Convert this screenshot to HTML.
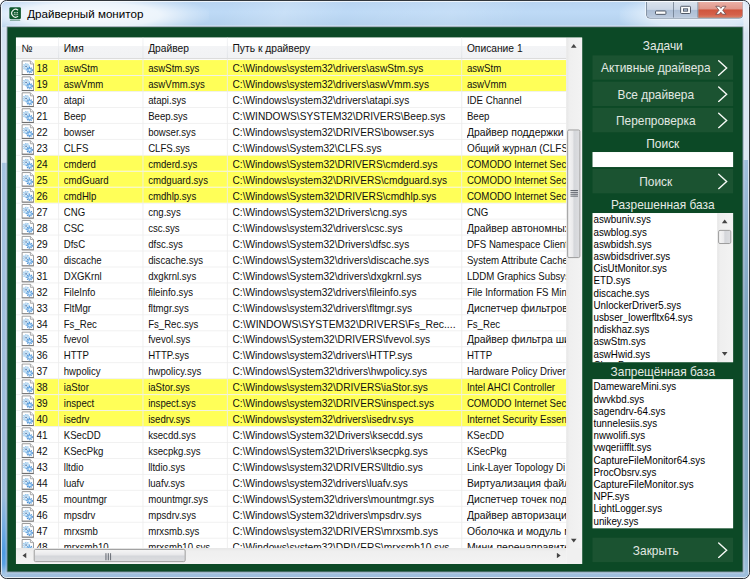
<!DOCTYPE html>
<html lang="ru">
<head>
<meta charset="utf-8">
<title>Драйверный монитор</title>
<style>
html,body{margin:0;padding:0;background:#fff;overflow:hidden;}
body{width:750px;height:579px;position:relative;font-family:"Liberation Sans",sans-serif;}
#sc{position:absolute;left:0;top:0;width:800px;height:617px;transform:scale(0.9375,0.93841);transform-origin:0 0;}
/* window frame */
#win{position:absolute;left:0;top:0;width:800px;height:617px;box-sizing:border-box;border:1px solid #1d222a;border-radius:7px;
 background:linear-gradient(180deg,#b8d4f1 0px,#bedaf6 12px,#b2cfec 28px,#a3c1df 120px,#9cbbda 400px,#9fbfde 617px);overflow:hidden;}
#win:before{content:"";position:absolute;left:0;top:0;right:0;bottom:0;border:1px solid rgba(255,255,255,.85);border-radius:6px;}
#glow{position:absolute;left:-14px;top:-7px;width:236px;height:44px;background:radial-gradient(ellipse at 46% 50%,rgba(255,255,255,.92) 0%,rgba(255,255,255,.72) 42%,rgba(255,255,255,.28) 60%,rgba(255,255,255,0) 74%);}
#glow2{position:absolute;left:660px;top:-8px;width:150px;height:46px;background:radial-gradient(ellipse at 55% 50%,rgba(255,255,255,.62) 0%,rgba(255,255,255,.5) 45%,rgba(255,255,255,0) 75%);}
#topline{position:absolute;left:6px;top:26.5px;width:786px;height:1.1px;background:rgba(255,255,255,.7);}
#streak{position:absolute;left:0;top:0;width:798px;height:29px;background:linear-gradient(115deg,rgba(255,255,255,0) 30%,rgba(255,255,255,.18) 38%,rgba(255,255,255,0) 46%,rgba(255,255,255,.12) 60%,rgba(255,255,255,0) 70%);}
#fl{position:absolute;left:1px;top:28px;width:6px;height:585px;background:linear-gradient(180deg,#d4e2f1 0,#dae5f1 144px,#a6c4e1 145px,#9fbedc 360px,#9bbbda 500px,#78aee2 530px,#4f9be2 560px,#5aa2e4 572px,#a6c6e4 583px);}
#fr{position:absolute;left:791.5px;top:1px;width:5.5px;height:612px;background:linear-gradient(180deg,#cfe0f3 0,#d6e3f1 27px,#dce7f3 168px,#a0bfdc 169px,#8fb1cf 247px,#7fa5c2 327px,#84a9c6 547px,#9dbedb 610px);}
#ticon{position:absolute;left:8px;top:5px;width:16px;height:17px;}
#title{position:absolute;left:28px;top:4.7px;height:18px;line-height:18px;font-size:12.4px;color:#000;white-space:nowrap;}
/* caption buttons */
#cap{position:absolute;left:688.3px;top:1px;width:103.7px;height:17.6px;border:1px solid rgba(85,98,116,.72);border-top:none;border-radius:0 0 5px 5px;box-sizing:border-box;overflow:hidden;box-shadow:0 0 0 1px rgba(255,255,255,.55);}
#cap div{position:absolute;top:0;height:17px;}
#bmin{left:0;width:27.7px;background:linear-gradient(180deg,#d9e1ec 0,#cbd6e5 47%,#adbed5 53%,#bccadd 100%);border-right:1px solid rgba(85,98,116,.7);}
#bmax{left:28.7px;width:25px;background:linear-gradient(180deg,#d9e1ec 0,#cbd6e5 47%,#adbed5 53%,#bccadd 100%);border-right:1px solid rgba(85,98,116,.7);}
#bcl{left:54.7px;width:48px;background:linear-gradient(180deg,#ebb0a6 0,#e0978b 45%,#d0553d 50%,#d4614a 80%,#db8168 100%);box-shadow:inset 0 -1px 0 rgba(150,95,70,.55),inset 1px 0 0 rgba(150,95,70,.35);}
#cap svg{position:absolute;left:-0.2px;top:-1px;}
/* client */
#client{position:absolute;left:7px;top:28.3px;width:784.4px;height:579.9px;background:#0c4926;box-shadow:0 0 0 1px rgba(80,100,118,.62),0 0 0 2px rgba(255,255,255,.36);}
#ci{position:absolute;left:0;top:.7px;width:784px;height:579px;}
/* listview */
#lv{position:absolute;left:9px;top:10px;width:604px;height:560.8px;background:#fff;overflow:hidden;font-size:10.8px;color:#101010;}
#hd{position:absolute;left:0;top:0;width:587px;height:23px;background:linear-gradient(180deg,#fff 0,#fff 40%,#f3f4f6 42%,#f1f2f4 100%);border-bottom:1px solid #d5d5d5;box-sizing:border-box;}
#hd span{position:absolute;top:0;height:22px;line-height:23px;font-size:11.4px;color:#111;white-space:nowrap;transform:scaleX(.96);transform-origin:0 0;}
#hd i{position:absolute;top:0;width:1px;height:22px;background:linear-gradient(180deg,#f4f5f6,#dfe2e6);}
#body{position:absolute;left:0;top:0;width:587px;height:544.4px;overflow:hidden;}
.r{position:absolute;left:0;width:587px;height:17px;border-bottom:1px solid #f0f0f0;box-sizing:border-box;white-space:nowrap;line-height:16px;}
.r span{position:absolute;top:1px;height:16px;overflow:hidden;}
.r .bg{display:none;position:absolute;left:19.7px;top:0;width:570px;height:16px;background:#ffff58;}
.y .bg{display:block;}
.c0{left:21.9px;width:22px;}
.c1{left:51px;width:86px;transform:scaleX(.95);transform-origin:0 0;}
.c2{left:141px;width:86px;transform:scaleX(.95);transform-origin:0 0;}
.c3{left:231px;width:241px;transform:scaleX(1.004);transform-origin:0 0;}
.c4{left:481px;width:140px;transform-origin:0 0;}
.ic{position:absolute;left:4px;top:0;width:16px;height:16px;}
.vg{position:absolute;top:23px;width:1px;height:522px;background:rgba(236,236,236,.9);}
/* scrollbars */
.sbv{position:absolute;left:587px;top:0;width:17px;height:544px;background:linear-gradient(90deg,#e6e6e6 0,#efefef 20%,#f3f3f3 100%);}
.sbh{position:absolute;left:0;top:544.4px;width:587px;height:17px;background:linear-gradient(180deg,#e6e6e6 0,#efefef 20%,#f3f3f3 100%);}
.corner{position:absolute;left:587px;top:544px;width:17px;height:17px;background:#f0f0f0;}
.thumbv{position:absolute;left:1px;width:14px;border:1px solid #979797;border-radius:2px;box-sizing:border-box;background:linear-gradient(90deg,#f5f5f5 0,#e9e9eb 45%,#d4d6da 50%,#dcdde0 100%);}
.thumbh{position:absolute;top:1px;height:14px;border:1px solid #979797;border-radius:2px;box-sizing:border-box;background:linear-gradient(180deg,#f5f5f5 0,#e9e9eb 45%,#d4d6da 50%,#dcdde0 100%);}
.arr{position:absolute;width:0;height:0;}
/* right panel */
.lbl{position:absolute;left:624px;width:150px;height:16px;line-height:16px;text-align:center;color:#e6ebe5;font-size:12.7px;white-space:nowrap;}
.btn{position:absolute;left:624px;width:150px;height:26px;background:#1b5331;color:#e2e8e2;font-size:12.7px;line-height:29.5px;white-space:nowrap;}
.btn span{position:absolute;left:0;top:0;width:135px;height:26px;text-align:center;overflow:hidden;}
.btn svg{position:absolute;left:131.2px;top:4px;}
#edit{position:absolute;left:624px;top:131.6px;width:150px;height:16.4px;background:#fff;}
.lb{position:absolute;left:624px;width:150px;height:159px;background:#fff;overflow:hidden;font-size:11px;line-height:13px;color:#000;}
.lb div.it{padding-left:2px;white-space:nowrap;}
.lb .items{position:absolute;left:0.7px;top:1.3px;transform:scaleX(.95);transform-origin:0 0;}
.lb .items div{white-space:nowrap;height:13px;}
</style>
</head>
<body>
<svg width="0" height="0" style="position:absolute">
 <defs>
  <symbol id="pg" viewBox="0 0 16 16">
   <path d="M2.6 0.9 H11.4 L14.7 4.2 V15.4 H2.6 Z" fill="#fff" stroke="#939393" stroke-width="1"/>
   <path d="M2.2 15.5 H15.1" stroke="#6f6f6f" stroke-width="1.1" fill="none"/>
   <path d="M11.4 0.9 V4.2 H14.7" fill="#f2f2f2" stroke="#9c9c9c" stroke-width=".9"/>
   <circle cx="7" cy="7.1" r="3.25" fill="none" stroke="#7ab6e6" stroke-width="1.1" stroke-dasharray="1.35 0.95"/>
   <circle cx="7" cy="7.1" r="2.8" fill="#b2d6f0"/>
   <circle cx="7" cy="7.1" r="1.7" fill="#dcedfa"/>
   <circle cx="6.8" cy="6.9" r="0.85" fill="#50709f"/>
   <circle cx="10.6" cy="10.7" r="2.9" fill="none" stroke="#3f88d2" stroke-width="1.1" stroke-dasharray="1.25 0.85"/>
   <circle cx="10.6" cy="10.7" r="2.45" fill="#69a8e1"/>
   <circle cx="10.6" cy="10.7" r="1.25" fill="#d8ecfb"/>
  </symbol>
  <symbol id="chev" viewBox="0 0 16 18">
   <path d="M3.6 1.7 L12.1 9.45 L3.6 17.2" fill="none" stroke="#f7f9f6" stroke-width="1.5" stroke-linecap="round" stroke-linejoin="miter"/>
  </symbol>
 </defs>
</svg>
<div id="sc">
<div id="win">
 <div id="fl"></div><div id="fr"></div>
 <div id="glow"></div>
 <div id="streak"></div><div id="glow2"></div>
 <div id="topline"></div>
 <svg id="ticon" viewBox="0 0 16 17">
  <rect x="1" y="1.6" width="12.3" height="12.9" rx="1.5" fill="#10592f"/>
  <path d="M10.3 5 A4.1 4.1 0 1 0 10.3 11.2" fill="none" stroke="#edf3ed" stroke-width="1.3"/>
  <path d="M6 7.5 H7.6 M8.6 7.5 H10.2" stroke="#edf3ed" stroke-width="1.15"/>
  <path d="M5.6 9.2 Q8 10.6 10.4 9.2" stroke="#cfe0d2" stroke-width=".7" fill="none"/>
  <rect x="1.6" y="15.3" width="11" height="1" fill="#5d8f78" opacity=".7"/>
 </svg>
 <div id="title">Драйверный монитор</div>
 <div id="cap">
  <div id="bmin"></div><div id="bmax"></div><div id="bcl"></div>
  <svg width="103" height="19" viewBox="0 0 103 19">
   <rect x="9.2" y="10.7" width="11.1" height="3.6" rx=".8" fill="#fdfdfd" stroke="#48505e" stroke-width="1"/>
   <rect x="36" y="5.7" width="10.5" height="7.7" rx=".9" fill="#fdfdfd" stroke="#48505e" stroke-width="1"/>
   <rect x="39" y="8.4" width="4.5" height="2.5" fill="#aebfd6" stroke="#48505e" stroke-width=".9"/>
   <path d="M73.5 5.7 L77.1 5.7 L78.9 7.9 L80.7 5.7 L84.3 5.7 L80.9 9.95 L84.3 14.2 L80.7 14.2 L78.9 12 L77.1 14.2 L73.5 14.2 L76.9 9.95 Z" fill="#fff" stroke="#6a4a4c" stroke-width=".85" stroke-linejoin="round"/>
  </svg>
 </div>
 <div id="client"><div id="ci">
  <div id="lv">
   <div id="body">
<div class="r y" style="top:24px"><svg class="ic"><use href="#pg"/></svg><b class="bg"></b><span class="c0">18</span><span class="c1">aswStm</span><span class="c2">aswStm.sys</span><span class="c3">C:\Windows\system32\drivers\aswStm.sys</span><span class="c4" style="transform:scaleX(0.955)">aswStm</span></div>
<div class="r y" style="top:41px"><svg class="ic"><use href="#pg"/></svg><b class="bg"></b><span class="c0">19</span><span class="c1">aswVmm</span><span class="c2">aswVmm.sys</span><span class="c3">C:\Windows\system32\drivers\aswVmm.sys</span><span class="c4" style="transform:scaleX(0.955)">aswVmm</span></div>
<div class="r" style="top:58px"><svg class="ic"><use href="#pg"/></svg><b class="bg"></b><span class="c0">20</span><span class="c1">atapi</span><span class="c2">atapi.sys</span><span class="c3">C:\Windows\system32\drivers\atapi.sys</span><span class="c4" style="transform:scaleX(0.955)">IDE Channel</span></div>
<div class="r" style="top:75px"><svg class="ic"><use href="#pg"/></svg><b class="bg"></b><span class="c0">21</span><span class="c1">Beep</span><span class="c2">Beep.sys</span><span class="c3">C:\WINDOWS\SYSTEM32\DRIVERS\Beep.sys</span><span class="c4" style="transform:scaleX(0.955)">Beep</span></div>
<div class="r" style="top:92px"><svg class="ic"><use href="#pg"/></svg><b class="bg"></b><span class="c0">22</span><span class="c1">bowser</span><span class="c2">bowser.sys</span><span class="c3">C:\Windows\system32\DRIVERS\bowser.sys</span><span class="c4" style="transform:scaleX(1.03)">Драйвер поддержки се</span></div>
<div class="r" style="top:109px"><svg class="ic"><use href="#pg"/></svg><b class="bg"></b><span class="c0">23</span><span class="c1">CLFS</span><span class="c2">CLFS.sys</span><span class="c3">C:\Windows\System32\CLFS.sys</span><span class="c4" style="transform:scaleX(0.985)">Общий журнал (CLFS)</span></div>
<div class="r y" style="top:126px"><svg class="ic"><use href="#pg"/></svg><b class="bg"></b><span class="c0">24</span><span class="c1">cmderd</span><span class="c2">cmderd.sys</span><span class="c3">C:\Windows\System32\DRIVERS\cmderd.sys</span><span class="c4" style="transform:scaleX(0.955)">COMODO Internet Security</span></div>
<div class="r y" style="top:143px"><svg class="ic"><use href="#pg"/></svg><b class="bg"></b><span class="c0">25</span><span class="c1">cmdGuard</span><span class="c2">cmdguard.sys</span><span class="c3">C:\Windows\system32\DRIVERS\cmdguard.sys</span><span class="c4" style="transform:scaleX(0.955)">COMODO Internet Security</span></div>
<div class="r y" style="top:160px"><svg class="ic"><use href="#pg"/></svg><b class="bg"></b><span class="c0">26</span><span class="c1">cmdHlp</span><span class="c2">cmdhlp.sys</span><span class="c3">C:\Windows\System32\DRIVERS\cmdhlp.sys</span><span class="c4" style="transform:scaleX(0.955)">COMODO Internet Security</span></div>
<div class="r" style="top:177px"><svg class="ic"><use href="#pg"/></svg><b class="bg"></b><span class="c0">27</span><span class="c1">CNG</span><span class="c2">cng.sys</span><span class="c3">C:\Windows\System32\Drivers\cng.sys</span><span class="c4" style="transform:scaleX(0.955)">CNG</span></div>
<div class="r" style="top:194px"><svg class="ic"><use href="#pg"/></svg><b class="bg"></b><span class="c0">28</span><span class="c1">CSC</span><span class="c2">csc.sys</span><span class="c3">C:\Windows\system32\drivers\csc.sys</span><span class="c4" style="transform:scaleX(1.03)">Драйвер автономных</span></div>
<div class="r" style="top:211px"><svg class="ic"><use href="#pg"/></svg><b class="bg"></b><span class="c0">29</span><span class="c1">DfsC</span><span class="c2">dfsc.sys</span><span class="c3">C:\Windows\System32\Drivers\dfsc.sys</span><span class="c4" style="transform:scaleX(0.955)">DFS Namespace Client</span></div>
<div class="r" style="top:228px"><svg class="ic"><use href="#pg"/></svg><b class="bg"></b><span class="c0">30</span><span class="c1">discache</span><span class="c2">discache.sys</span><span class="c3">C:\Windows\System32\drivers\discache.sys</span><span class="c4" style="transform:scaleX(0.955)">System Attribute Cache</span></div>
<div class="r" style="top:245px"><svg class="ic"><use href="#pg"/></svg><b class="bg"></b><span class="c0">31</span><span class="c1">DXGKrnl</span><span class="c2">dxgkrnl.sys</span><span class="c3">C:\Windows\System32\drivers\dxgkrnl.sys</span><span class="c4" style="transform:scaleX(0.955)">LDDM Graphics Subsystem</span></div>
<div class="r" style="top:262px"><svg class="ic"><use href="#pg"/></svg><b class="bg"></b><span class="c0">32</span><span class="c1">FileInfo</span><span class="c2">fileinfo.sys</span><span class="c3">C:\Windows\system32\drivers\fileinfo.sys</span><span class="c4" style="transform:scaleX(0.955)">File Information FS Mini</span></div>
<div class="r" style="top:279px"><svg class="ic"><use href="#pg"/></svg><b class="bg"></b><span class="c0">33</span><span class="c1">FltMgr</span><span class="c2">fltmgr.sys</span><span class="c3">C:\Windows\system32\drivers\fltmgr.sys</span><span class="c4" style="transform:scaleX(1.03)">Диспетчер фильтров</span></div>
<div class="r" style="top:296px"><svg class="ic"><use href="#pg"/></svg><b class="bg"></b><span class="c0">34</span><span class="c1">Fs_Rec</span><span class="c2">Fs_Rec.sys</span><span class="c3" style="transform:scaleX(1.03)">C:\WINDOWS\SYSTEM32\DRIVERS\Fs_Rec....</span><span class="c4" style="transform:scaleX(0.955)">Fs_Rec</span></div>
<div class="r" style="top:313px"><svg class="ic"><use href="#pg"/></svg><b class="bg"></b><span class="c0">35</span><span class="c1">fvevol</span><span class="c2">fvevol.sys</span><span class="c3">C:\Windows\System32\DRIVERS\fvevol.sys</span><span class="c4" style="transform:scaleX(1.03)">Драйвер фильтра шиф</span></div>
<div class="r" style="top:330px"><svg class="ic"><use href="#pg"/></svg><b class="bg"></b><span class="c0">36</span><span class="c1">HTTP</span><span class="c2">HTTP.sys</span><span class="c3">C:\Windows\system32\drivers\HTTP.sys</span><span class="c4" style="transform:scaleX(0.955)">HTTP</span></div>
<div class="r" style="top:347px"><svg class="ic"><use href="#pg"/></svg><b class="bg"></b><span class="c0">37</span><span class="c1">hwpolicy</span><span class="c2">hwpolicy.sys</span><span class="c3">C:\Windows\System32\drivers\hwpolicy.sys</span><span class="c4" style="transform:scaleX(0.955)">Hardware Policy Driver</span></div>
<div class="r y" style="top:364px"><svg class="ic"><use href="#pg"/></svg><b class="bg"></b><span class="c0">38</span><span class="c1">iaStor</span><span class="c2">iaStor.sys</span><span class="c3">C:\Windows\system32\DRIVERS\iaStor.sys</span><span class="c4" style="transform:scaleX(0.955)">Intel AHCI Controller</span></div>
<div class="r y" style="top:381px"><svg class="ic"><use href="#pg"/></svg><b class="bg"></b><span class="c0">39</span><span class="c1">inspect</span><span class="c2">inspect.sys</span><span class="c3">C:\Windows\system32\DRIVERS\inspect.sys</span><span class="c4" style="transform:scaleX(0.955)">COMODO Internet Security</span></div>
<div class="r y" style="top:398px"><svg class="ic"><use href="#pg"/></svg><b class="bg"></b><span class="c0">40</span><span class="c1">isedrv</span><span class="c2">isedrv.sys</span><span class="c3">C:\Windows\system32\drivers\isedrv.sys</span><span class="c4" style="transform:scaleX(0.955)">Internet Security Essentials</span></div>
<div class="r" style="top:415px"><svg class="ic"><use href="#pg"/></svg><b class="bg"></b><span class="c0">41</span><span class="c1">KSecDD</span><span class="c2">ksecdd.sys</span><span class="c3">C:\Windows\System32\Drivers\ksecdd.sys</span><span class="c4" style="transform:scaleX(0.955)">KSecDD</span></div>
<div class="r" style="top:432px"><svg class="ic"><use href="#pg"/></svg><b class="bg"></b><span class="c0">42</span><span class="c1">KSecPkg</span><span class="c2">ksecpkg.sys</span><span class="c3">C:\Windows\System32\Drivers\ksecpkg.sys</span><span class="c4" style="transform:scaleX(0.955)">KSecPkg</span></div>
<div class="r" style="top:449px"><svg class="ic"><use href="#pg"/></svg><b class="bg"></b><span class="c0">43</span><span class="c1">lltdio</span><span class="c2">lltdio.sys</span><span class="c3">C:\Windows\system32\DRIVERS\lltdio.sys</span><span class="c4" style="transform:scaleX(0.955)">Link-Layer Topology Di</span></div>
<div class="r" style="top:466px"><svg class="ic"><use href="#pg"/></svg><b class="bg"></b><span class="c0">44</span><span class="c1">luafv</span><span class="c2">luafv.sys</span><span class="c3">C:\Windows\system32\drivers\luafv.sys</span><span class="c4" style="transform:scaleX(1.03)">Виртуализация файло</span></div>
<div class="r" style="top:483px"><svg class="ic"><use href="#pg"/></svg><b class="bg"></b><span class="c0">45</span><span class="c1">mountmgr</span><span class="c2">mountmgr.sys</span><span class="c3">C:\Windows\System32\drivers\mountmgr.sys</span><span class="c4" style="transform:scaleX(1.03)">Диспетчер точек подк</span></div>
<div class="r" style="top:500px"><svg class="ic"><use href="#pg"/></svg><b class="bg"></b><span class="c0">46</span><span class="c1">mpsdrv</span><span class="c2">mpsdrv.sys</span><span class="c3">C:\Windows\System32\drivers\mpsdrv.sys</span><span class="c4" style="transform:scaleX(1.03)">Драйвер авторизации</span></div>
<div class="r" style="top:517px"><svg class="ic"><use href="#pg"/></svg><b class="bg"></b><span class="c0">47</span><span class="c1">mrxsmb</span><span class="c2">mrxsmb.sys</span><span class="c3">C:\Windows\system32\DRIVERS\mrxsmb.sys</span><span class="c4" style="transform:scaleX(1.03)">Оболочка и модуль ми</span></div>
<div class="r" style="top:534px"><svg class="ic"><use href="#pg"/></svg><b class="bg"></b><span class="c0">48</span><span class="c1">mrxsmb10</span><span class="c2">mrxsmb10.sys</span><span class="c3">C:\Windows\system32\DRIVERS\mrxsmb10.sys</span><span class="c4" style="transform:scaleX(1.03)">Мини-перенаправитель</span></div>
    <div class="vg" style="left:45px"></div><div class="vg" style="left:135px"></div><div class="vg" style="left:225px"></div><div class="vg" style="left:475px"></div>
   </div>
   <div id="hd">
    <span style="left:6px">№</span><span style="left:51px">Имя</span><span style="left:141px">Драйвер</span><span style="left:231px">Путь к драйверу</span><span style="left:481px">Описание 1</span>
    <i style="left:45px"></i><i style="left:135px"></i><i style="left:225px"></i><i style="left:475px"></i>
   </div>
   <div class="sbv">
    <div class="arr" style="left:5px;top:7.5px;border-left:3.5px solid transparent;border-right:3.5px solid transparent;border-bottom:4px solid #444"></div>
    <div class="thumbv" style="top:98px;height:137px"></div>
    <svg style="position:absolute;left:3.6px;top:162px" width="9" height="9" viewBox="0 0 9 9"><path d="M0.5 1H8.5M0.5 3H8.5M0.5 5H8.5M0.5 7H8.5" stroke="#5a5e66" stroke-width="1"/></svg>
    <div class="arr" style="left:5px;top:534px;border-left:3.5px solid transparent;border-right:3.5px solid transparent;border-top:4px solid #444"></div>
   </div>
   <div class="sbh">
    <div class="arr" style="left:6.5px;top:5px;border-top:3.5px solid transparent;border-bottom:3.5px solid transparent;border-right:4px solid #444"></div>
    <div class="thumbh" style="left:18.5px;width:162.5px"></div>
    <svg style="position:absolute;left:95.4px;top:4.5px" width="7" height="9" viewBox="0 0 7 9"><path d="M1 0.5V8M3.5 0.5V8M6 0.5V8" stroke="#5a5e66" stroke-width="1"/></svg>
    <div class="arr" style="left:576.5px;top:5px;border-top:3.5px solid transparent;border-bottom:3.5px solid transparent;border-left:4px solid #444"></div>
   </div>
   <div class="corner"></div>
  </div>

  <div class="lbl" style="top:11px">Задачи</div>
  <div class="btn" style="top:29.2px"><span>Активные драйвера</span><svg width="16" height="18"><use href="#chev"/></svg></div>
  <div class="btn" style="top:57.1px"><span>Все драйвера</span><svg width="16" height="18"><use href="#chev"/></svg></div>
  <div class="btn" style="top:85.1px"><span>Перепроверка</span><svg width="16" height="18"><use href="#chev"/></svg></div>
  <div class="lbl" style="top:116.1px">Поиск</div>
  <div id="edit"></div>
  <div class="btn" style="top:150px"><span>Поиск</span><svg width="16" height="18"><use href="#chev"/></svg></div>
  <div class="lbl" style="top:180.6px">Разрешенная база</div>
  <div class="lb" style="top:197px">
   <div class="items"><div>aswbuniv.sys</div><div>aswblog.sys</div><div>aswbidsh.sys</div><div>aswbidsdriver.sys</div><div>CisUtMonitor.sys</div><div>ETD.sys</div><div>discache.sys</div><div>UnlockerDriver5.sys</div><div>usbser_lowerfltx64.sys</div><div>ndiskhaz.sys</div><div>aswStm.sys</div><div>aswHwid.sys</div><div style="margin-top:-1.7px">ClassPnp.sys</div></div>
   <div style="position:absolute;left:133px;top:0;width:17px;height:159px;background:linear-gradient(90deg,#e6e6e6 0,#efefef 20%,#f3f3f3 100%)">
    <div class="arr" style="left:5px;top:7.5px;border-left:3.5px solid transparent;border-right:3.5px solid transparent;border-bottom:4px solid #444"></div>
    <div class="thumbv" style="top:18.5px;height:15px"></div>
    <div class="arr" style="left:5px;top:148.5px;border-left:3.5px solid transparent;border-right:3.5px solid transparent;border-top:4px solid #444"></div>
   </div>
  </div>
  <div class="lbl" style="top:359.3px">Запрещённая база</div>
  <div class="lb" style="top:374.5px"><div class="items"><div>DamewareMini.sys</div><div>dwvkbd.sys</div><div>sagendrv-64.sys</div><div>tunnelesiis.sys</div><div>nwwolifi.sys</div><div>vwqeriifflt.sys</div><div>CaptureFileMonitor64.sys</div><div>ProcObsrv.sys</div><div>CaptureFileMonitor.sys</div><div>NPF.sys</div><div>LightLogger.sys</div><div>unikey.sys</div></div></div>
  <div class="btn" style="top:543.5px"><span>Закрыть</span><svg width="16" height="18"><use href="#chev"/></svg></div>
 </div></div>
</div>
</div>
</body>
</html>
